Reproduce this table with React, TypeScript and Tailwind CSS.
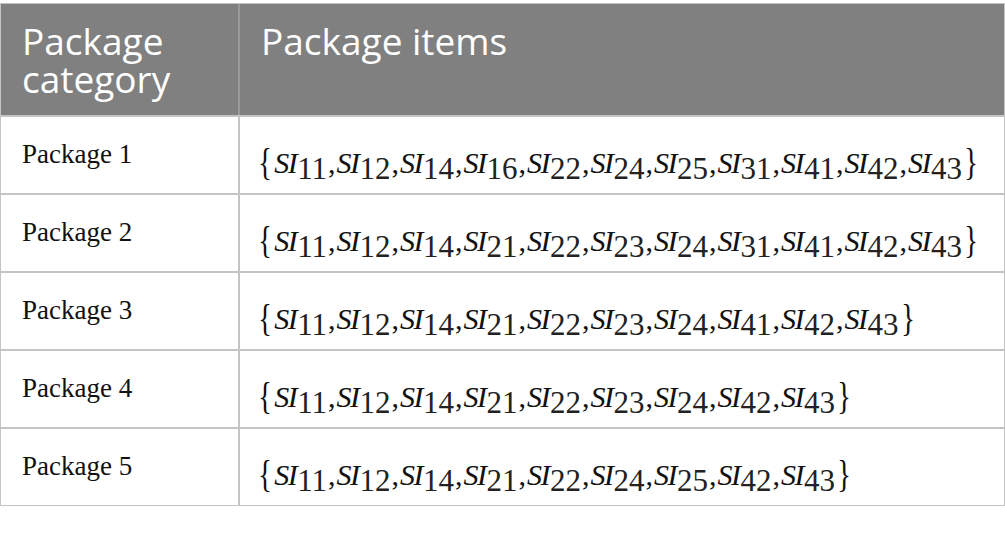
import React from "react";

const rows: { label: string; items: string[] }[] = [
  { label: "Package 1", items: ["11", "12", "14", "16", "22", "24", "25", "31", "41", "42", "43"] },
  { label: "Package 2", items: ["11", "12", "14", "21", "22", "23", "24", "31", "41", "42", "43"] },
  { label: "Package 3", items: ["11", "12", "14", "21", "22", "23", "24", "41", "42", "43"] },
  { label: "Package 4", items: ["11", "12", "14", "21", "22", "23", "24", "42", "43"] },
  { label: "Package 5", items: ["11", "12", "14", "21", "22", "24", "25", "42", "43"] },
];

function MathSet({ items }: { items: string[] }) {
  return (
    <div className="flex items-baseline whitespace-nowrap text-[30px] leading-[40px] text-[#111]" style={{ fontFamily: '"Liberation Serif", "Times New Roman", serif' }}>
      <span className="text-[38px] leading-[40px] scale-x-75 relative top-[2px]">{"{"}</span>
      {items.map((n, i) => (
        <span key={i} className="flex items-baseline">
          <span className="italic tracking-[-1.5px]">SI</span>
          <span className="relative top-[6px] text-[31px] text-[#222] ml-[1px]">{n}</span>
          {i < items.length - 1 && <span className="ml-[1px] mr-[1px]">,</span>}
        </span>
      ))}
      <span className="text-[38px] leading-[40px] scale-x-75 relative top-[2px]">{"}"}</span>
    </div>
  );
}

export default function App() {
  return (
    <div className="w-[1005px] h-[533px] bg-white pt-[3px]">
      <div className="border border-[#c4c4c4] w-[1005px]">
        <div className="grid grid-cols-[239px_1fr] h-[111px] bg-[#808080] text-white" style={{ fontFamily: '"Open Sans", sans-serif' }}>
          <div className="border-r-2 border-[#9a9a9a] pl-[21px] pt-[18px] text-[37px] leading-[38px]">
            Package
            <br />
            category
          </div>
          <div className="pl-[21px] pt-[18px] text-[37px] leading-[38px]">Package items</div>
        </div>
        {rows.map((r, idx) => (
          <div key={idx} className="grid grid-cols-[239px_1fr] h-[78px] border-t-2 border-[#c4c4c4]">
            <div className="border-r-2 border-[#c4c4c4] pl-[21px] pt-[21px] text-[27px] leading-[32px] text-[#111]" style={{ fontFamily: '"Liberation Serif", "Times New Roman", serif' }}>
              {r.label}
            </div>
            <div className="pl-[16px] pt-[23px]">
              <MathSet items={r.items} />
            </div>
          </div>
        ))}
      </div>
    </div>
  );
}
